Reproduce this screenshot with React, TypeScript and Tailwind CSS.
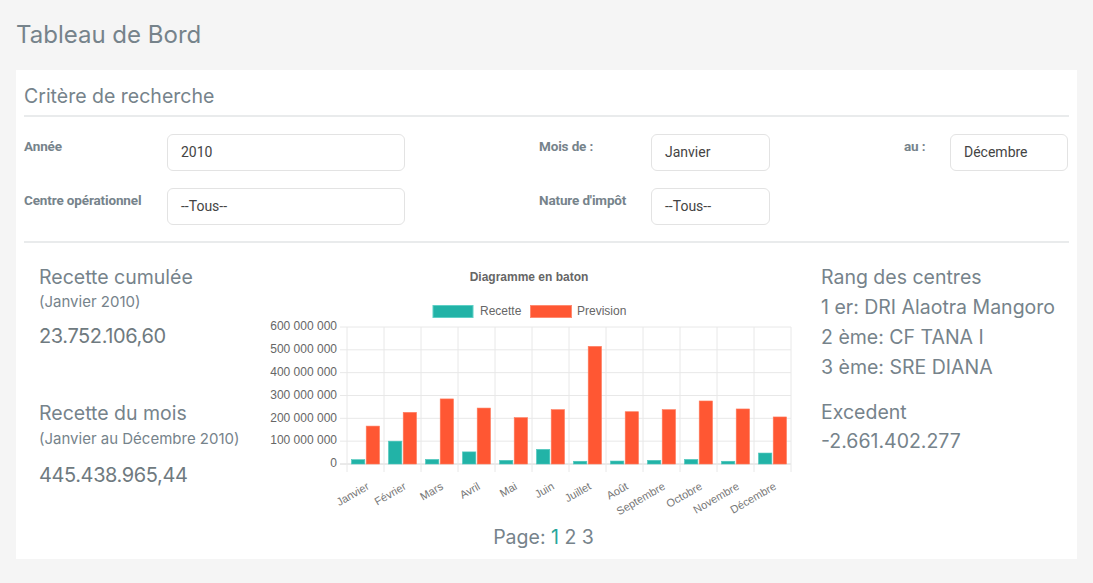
import React from 'react'

const months = ['Janvier', 'Février', 'Mars', 'Avril', 'Mai', 'Juin', 'Juillet', 'Août', 'Septembre', 'Octobre', 'Novembre', 'Décembre']
const recette = [19, 100, 20, 53, 16, 64, 12, 13, 16, 20, 12, 48]
const prevision = [166, 226, 285, 245, 203, 238, 515, 229, 238, 276, 241, 206]

const TEAL = '#22b3a7'
const ORANGE = '#ff5733'

// chart geometry, in page coordinates (svg is shifted by its own offset)
const X0 = 347
const STEP = 37
const Y0 = 462
const PX_PER_M = 137 / 600

function BarChart() {
  const ticks = [0, 100, 200, 300, 400, 500, 600]
  return (
    <svg width={540} height={256} className="block shrink-0 overflow-visible" style={{ fontFamily: '"Liberation Sans", Arial, sans-serif' }}>
      <g transform="translate(-265,-260)">
        <text x={529} y={276} textAnchor="middle" dominantBaseline="middle" fontSize={12} fontWeight="bold" fill="#666">
          Diagramme en baton
        </text>

        {/* legend */}
        <rect x={433} y={303.5} width={40} height={12} fill={TEAL} stroke="#5fd0c6" strokeWidth={1} />
        <text x={480} y={310} dominantBaseline="middle" fontSize={12} fill="#666">Recette</text>
        <rect x={530.5} y={303.5} width={41} height={12} fill={ORANGE} stroke="#ff8a70" strokeWidth={1} />
        <text x={577} y={310} dominantBaseline="middle" fontSize={12} fill="#666">Prevision</text>

        {/* grid */}
        {ticks.map((t) => {
          const y = Y0 - t * PX_PER_M
          return (
            <g key={t}>
              <line x1={340} x2={791} y1={y} y2={y} stroke={t === 0 ? '#d4d4d4' : '#e8e8e8'} strokeWidth={1} />
              <text x={337} y={y} textAnchor="end" dominantBaseline="middle" fontSize={12} fill="#666">
                {t === 0 ? '0' : `${t} 000 000`}
              </text>
            </g>
          )
        })}
        {Array.from({ length: 13 }).map((_, i) => (
          <line key={i} x1={X0 + i * STEP} x2={X0 + i * STEP} y1={325} y2={470} stroke="#e8e8e8" strokeWidth={1} />
        ))}

        {/* bars */}
        {months.map((m, i) => {
          const cx = X0 + i * STEP + STEP / 2
          const hr = recette[i] * PX_PER_M
          const hp = prevision[i] * PX_PER_M
          return (
            <g key={m}>
              <rect x={cx - 14} y={Y0 - hr} width={13.3} height={hr} fill={TEAL} stroke="#4cc7bc" strokeWidth={0.6} />
              <rect x={cx + 0.7} y={Y0 - hp} width={13.3} height={hp} fill={ORANGE} stroke="#ff7a5c" strokeWidth={0.6} />
              <text
                x={cx + 3}
                y={484}
                textAnchor="end"
                dominantBaseline="middle"
                fontSize={11}
                fill="#777"
                transform={`rotate(-30 ${cx + 3} 484)`}
              >
                {m}
              </text>
            </g>
          )
        })}
      </g>
    </svg>
  )
}

function Field({ value, w }: { value: string; w: string }) {
  return (
    <div className={`${w} h-[37px] border border-[#e3e3e3] rounded-md flex items-center pl-[13px] text-[14px] text-[#444]`}>
      {value}
    </div>
  )
}

export default function App() {
  const label = 'text-[13.5px] font-bold text-[#76838b] pt-[2px] tracking-[-0.01em]'
  return (
    <div className="min-h-[583px] bg-[#f5f5f5] px-4 pt-[20px] pb-[25px] font-['Inter',sans-serif]">
      <h1 className="text-[24px] leading-[30px] text-[#76838b] mb-[20px]">Tableau de Bord</h1>

      <div className="bg-white px-2 pb-[10px]">
        <div className="pt-[14px] pb-[7px] text-[19.5px] leading-[24px] text-[#76838b]">Critère de recherche</div>
        <div className="h-[2px] bg-[#e9ebec]" />

        <div className="font-['Roboto',sans-serif] pt-[17px] pb-[16px] grid grid-cols-[143px_238px_134px_112px_119px_134px_46px_118px] gap-y-[17px] items-start">
          <div className={label}>Année</div>
          <Field value="2010" w="w-[238px]" />
          <div />
          <div className={label}>Mois de :</div>
          <Field value="Janvier" w="w-[119px]" />
          <div />
          <div className={label}>au :</div>
          <Field value="Décembre" w="w-[118px]" />

          <div className={label}>Centre opérationnel</div>
          <Field value="--Tous--" w="w-[238px]" />
          <div />
          <div className={label}>Nature d'impôt</div>
          <Field value="--Tous--" w="w-[119px]" />
        </div>

        <div className="h-[2px] bg-[#e9ebec]" />

        <div className="flex pt-[19px] pl-[15px]">
          <div className="w-[226px] shrink-0 text-[#76838b] pt-[2px]">
            <div className="text-[19.5px] leading-[26px]">Recette cumulée</div>
            <div className="text-[15px] leading-[24px]">(Janvier 2010)</div>
            <div className="text-[20px] leading-[26px] mt-[9px] text-[#6f7a80] tracking-[-0.02em]">23.752.106,60</div>

            <div className="text-[19.5px] leading-[26px] mt-[51px]">Recette du mois</div>
            <div className="text-[15px] leading-[26px]">(Janvier au Décembre 2010)</div>
            <div className="text-[20px] leading-[26px] mt-[10px] text-[#6f7a80] tracking-[-0.02em]">445.438.965,44</div>
          </div>

          <BarChart />

          <div className="pl-[16px] text-[19.5px] text-[#76838b]">
            <div className="leading-[30px]">Rang des centres</div>
            <div className="leading-[30px]">1 er: DRI Alaotra Mangoro</div>
            <div className="leading-[30px]">2 ème: CF TANA I</div>
            <div className="leading-[30px]">3 ème: SRE DIANA</div>
            <div className="leading-[29px] mt-[16px]">Excedent</div>
            <div className="leading-[29px]">-2.661.402.277</div>
          </div>
        </div>

        <div className="text-center text-[19.5px] leading-[24px] text-[#76838b] pt-[7px] pr-[6px]">
          Page: <span className="text-[#26a69a]">1</span> 2 3
        </div>
      </div>
    </div>
  )
}
